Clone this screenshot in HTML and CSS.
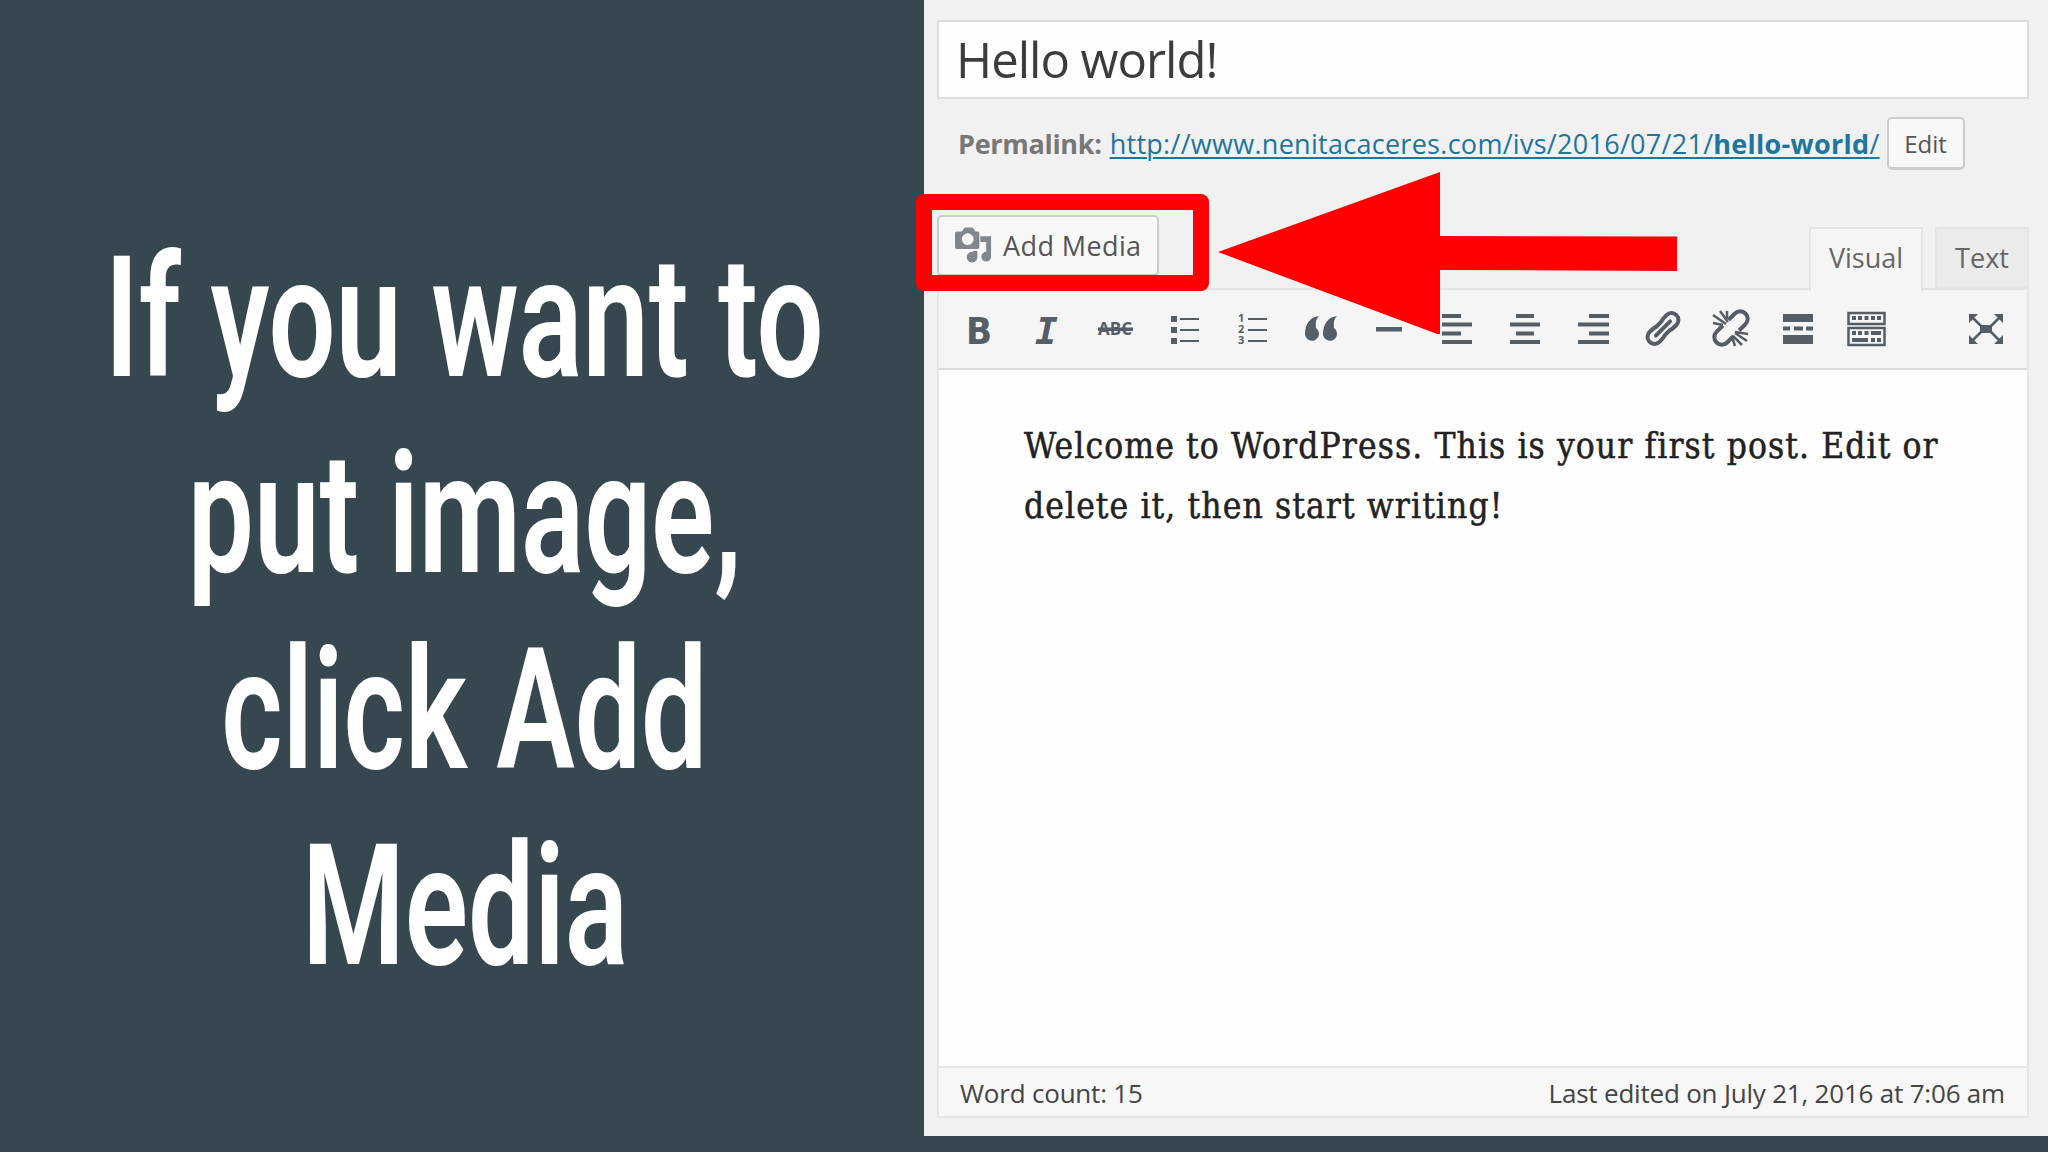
FILE: index.html
```html
<!DOCTYPE html>
<html lang="en">
<head>
    <meta charset="UTF-8">
    <meta name="viewport" content="width=device-width, initial-scale=1.0">
    <title>Add Media</title>
    <link rel="stylesheet" href="styles.css">
</head>
<body>
    <div class="slide">
        <h1 class="caption">
            <span class="line line-wide">If you want to</span>
            <span class="line">put image,</span>
            <span class="line">click Add</span>
            <span class="line">Media</span>
        </h1>
        <div class="screen">
            <div class="post-title"><span>Hello world!</span></div>
            <div class="permalink">
                <strong>Permalink:</strong>
                <a href="#">http://www.nenitacaceres.com/ivs/2016/07/21/<b>hello-world</b>/</a>
                <button class="edit-btn"><span>Edit</span></button>
            </div>
            <div class="editor-tools">
                <button class="media-btn">
                    <svg width="39" height="38" viewBox="0 0 40 38" fill="#82878c">
                        <path fill-rule="evenodd" d="M2 4h5l3-4h8l3 4h3q1 0 1 2v14q0 2-2 2H2q-2 0-2-2V6q0-2 2-2zM13 6a6 6 0 1 0 0.1 0z"/>
                        <path d="M26 9h11v21a5 5 0 1 1-5-5V15h-6z"/>
                        <path d="M19 24h4v6a5.500 5.500 0 1 1-5-5z"/>
                    </svg>
                    <span>Add Media</span>
                </button>
                <div class="tabs">
                    <div class="tab active"><span>Visual</span></div>
                    <div class="tab"><span>Text</span></div>
                </div>
            </div>
            <div class="editor">
                <div class="toolbar">
                    <svg class="icon" viewBox="0 0 48 48"><text class="bold" x="10" y="39">B</text></svg>
                    <svg class="icon" viewBox="0 0 48 48"><text class="italic" x="11" y="39">I</text></svg>
                    <svg class="icon" viewBox="0 0 48 48"><text class="strike" x="6" y="30" textLength="34" lengthAdjust="spacingAndGlyphs">ABC</text><path d="M6 22.500h35V26H6z"/></svg>
                    <svg class="icon" viewBox="0 0 48 48"><path d="M11 11h6v6h-6zM11 22h6v6h-6zM11 33h6v6h-6zM20 13h19v2H20zM20 24h19v2H20zM20 35h19v2H20z"/></svg>
                    <svg class="icon" viewBox="0 0 48 48"><text class="num" x="10" y="17">1</text><text class="num" x="10" y="28">2</text><text class="num" x="10" y="39">3</text><path d="M20 13h19v2H20zM20 24h19v2H20zM20 35h19v2H20z"/></svg>
                    <svg class="icon" viewBox="0 0 48 48"><path d="M23 11q-4 3-3 12a7 7 0 1 1-11 6C9 19 14 12 23 11z"/><path d="M41 11q-4 3-3 12a7 7 0 1 1-11 6C27 19 32 12 41 11z"/></svg>
                    <svg class="icon" viewBox="0 0 48 48"><path d="M12 22h26v4.500H12z"/></svg>
                    <svg class="icon" viewBox="0 0 48 48"><path d="M10 9h19v4H10zM10 17.500h30v4H10zM10 26.500h19v4H10zM10 35h30v4H10z"/></svg>
                    <svg class="icon" viewBox="0 0 48 48"><path d="M16 9h18v4H16zM10 17.500h30v4H10zM16 26.500h18v4H16zM10 35h30v4H10z"/></svg>
                    <svg class="icon" viewBox="0 0 48 48"><path d="M21 9h20v4H21zM10 17.500h31v4H10zM21 26.500h20v4H21zM10 35h31v4H10z"/></svg>
                    <svg class="icon" viewBox="0 0 48 48">
                        <g fill="none" stroke="#555d66" stroke-width="4" transform="rotate(-45 27 23.500)">
                            <path d="M24 17.500q-3-1-9-1a7 7 0 0 0 0 14q6 0 9-1h6q3 1 9 1a7 7 0 0 0 0-14q-6 0-9 1z"/>
                            <path d="M17 23.500h20" stroke-linecap="round" stroke-width="4"/>
                        </g>
                    </svg>
                    <svg class="icon" viewBox="0 0 48 48">
                        <g fill="none" stroke="#555d66" stroke-width="4">
                            <path d="M31 15.500h9a7.500 7.500 0 0 1 0 15h-9M23 15.500h-9a7.500 7.500 0 0 0 0 15h9" transform="rotate(-45 27 23)"/>
                            <path d="M9 10l13 9M16 6l8 11M23 6v8M9 18l10 2M31 27l13 2M31 28l12 8M29 31l9 9M28 32l3 9" stroke-width="2.500"/>
                        </g>
                    </svg>
                    <svg class="icon" viewBox="0 0 48 48"><path d="M11 9h30v8H11zM11 21.500h7v4h-7zM22 21.500h9v4h-9zM34 21.500h7v4h-7zM11 30h30v9H11z"/></svg>
                    <svg class="icon" viewBox="0 0 48 48">
                        <path fill="none" stroke="#555d66" stroke-width="2.500" d="M8.500 8h36v11h-36zM8.500 23h36v17h-36z"/>
                        <path d="M12 11h4v4h-4zM18 11h4v4h-4zM24.500 11h4v4h-4zM31 11h4v4h-4zM37 11h4v4h-4zM12 26h4v4h-4zM18 26h4v4h-4zM24.500 26h4v4h-4zM31 26h10v4H31zM12 33h16v4H12zM31 33h4v4h-4zM37 33h4v4h-4z"/>
                    </svg>
                    <svg class="icon fullscreen" viewBox="0 0 48 48">
                        <path d="M18 20h12v8H18zM7 9h9l-9 9zM41 9h-9l9 9zM7 39h9l-9-9zM41 39h-9l9-9z"/>
                        <path fill="none" stroke="#555d66" stroke-width="2.500" d="M9 11l10 10M39 11L29 21M9 37l10-10M39 37L29 27"/>
                    </svg>
                </div>
                <div class="content">
                    <div>Welcome to WordPress. This is your first post. Edit or</div>
                    <div>delete it, then start writing!</div>
                </div>
                <div class="statusbar">
                    <span>Word count: 15</span>
                    <span>Last edited on July 21, 2016 at 7:06 am</span>
                </div>
            </div>
        </div>
        <div class="highlight"></div>
        <svg class="arrow" viewBox="0 0 459 162"><path fill="#f00" d="M0 80L222 0v64l237 .5v34.500l-237-1v65z"/></svg>
    </div>
</body>
</html>
```
FILE: styles.css
```css
* {
    box-sizing: border-box;
}
body {
    margin: 0;
    background-color: #37474f;
    font-family: "Open Sans", sans-serif;
    color: #444;
}
.slide {
    position: relative;
    display: flex;
    width: 2048px;
    height: 1152px;
    overflow: hidden;
}
.caption {
    width: 924px;
    margin: 0;
    padding: 221px 0 0 5px;
    display: flex;
    flex-direction: column;
    align-items: center;
    font-family: "Roboto", sans-serif;
    font-size: 168px;
    font-weight: 600;
    line-height: 196px;
    color: #fff;
}
.line {
    display: block;
    white-space: nowrap;
    transform: scaleX(0.7);
}
.line-wide {
    transform: scaleX(0.706);
}
.screen {
    width: 1124px;
    height: 1136px;
    padding: 20px 19px 18px 13px;
    background-color: #f1f1f1;
    display: flex;
    flex-direction: column;
}
.post-title {
    height: 79px;
    line-height: 75px;
    padding-left: 17px;
    background-color: #fefefe;
    border: 2px solid #ddd;
    font-size: 49px;
    letter-spacing: -1px;
    color: #3a3d40;
}
.permalink {
    display: flex;
    align-items: center;
    height: 53px;
    margin-top: 18px;
    padding-left: 21px;
    font-size: 27px;
    color: #777;
    white-space: nowrap;
}
.permalink strong {
    letter-spacing: -0.3px;
}
.permalink a {
    margin-left: 8px;
    letter-spacing: 0.28px;
    color: #21759b;
    text-decoration-thickness: 2px;
    text-underline-offset: 3px;
}
button {
    font-family: inherit;
    color: #555;
    background-color: #f8f8f8;
    border: 2px solid #ccc;
    border-radius: 5px;
    padding: 0;
}
.edit-btn {
    width: 78px;
    height: 53px;
    margin-left: 7px;
    font-size: 24px;
    border-bottom-width: 3px;
}
.editor-tools {
    display: flex;
    justify-content: space-between;
    align-items: flex-start;
    height: 118px;
}
.media-btn {
    display: flex;
    align-items: center;
    width: 222px;
    height: 61px;
    margin-top: 45px;
    padding-left: 16px;
    font-size: 27px;
    letter-spacing: 0.4px;
}
.media-btn span {
    margin-left: 9px;
}
.tabs {
    display: flex;
    gap: 12px;
    margin-top: 57px;
}
.tab {
    width: 94px;
    height: 61px;
    line-height: 58px;
    text-align: center;
    font-size: 27px;
    color: #666;
    background-color: #ebebeb;
    border: 2px solid #e5e5e5;
}
.tab.active {
    position: relative;
    width: 114px;
    height: 64px;
    background-color: #f5f5f5;
    border-bottom: none;
}
.editor {
    flex: 1;
    display: flex;
    flex-direction: column;
    background-color: #fefefe;
    border: 2px solid #e5e5e5;
}
.toolbar {
    display: flex;
    gap: 20px;
    height: 80px;
    padding: 15px 17px 0 17px;
    background-color: #f5f5f5;
    border-bottom: 2px solid #ddd;
}
.icon {
    flex: none;
    width: 48px;
    height: 48px;
    fill: #555d66;
}
.fullscreen {
    margin-left: auto;
}
.bold {
    font: bold 38px "DejaVu Sans Condensed", sans-serif;
}
.italic {
    font: italic bold 38px "DejaVu Sans Mono", monospace;
}
.strike {
    font: bold 17px "Open Sans", sans-serif;
}
.num {
    font: bold 11px "Open Sans", sans-serif;
}
.content {
    flex: 1;
    padding: 46px 0 0 85px;
    font-family: "DejaVu Serif Condensed", "DejaVu Serif", serif;
    font-size: 35px;
    line-height: 60px;
    letter-spacing: 1.1px;
    -webkit-text-stroke: 0.5px #222;
    color: #222;
    white-space: nowrap;
}
.statusbar {
    display: flex;
    justify-content: space-between;
    height: 50px;
    padding: 0 22px 0 21px;
    line-height: 50px;
    font-size: 26px;
    letter-spacing: -0.2px;
    background-color: #f7f7f7;
    border-top: 2px solid #e5e5e5;
}
.highlight {
    position: absolute;
    left: 916px;
    top: 194px;
    width: 293px;
    height: 97px;
    border: 16.500px solid #f00;
    border-radius: 8px;
}
.arrow {
    position: absolute;
    left: 1218px;
    top: 172px;
    width: 459px;
    height: 162px;
}
```
